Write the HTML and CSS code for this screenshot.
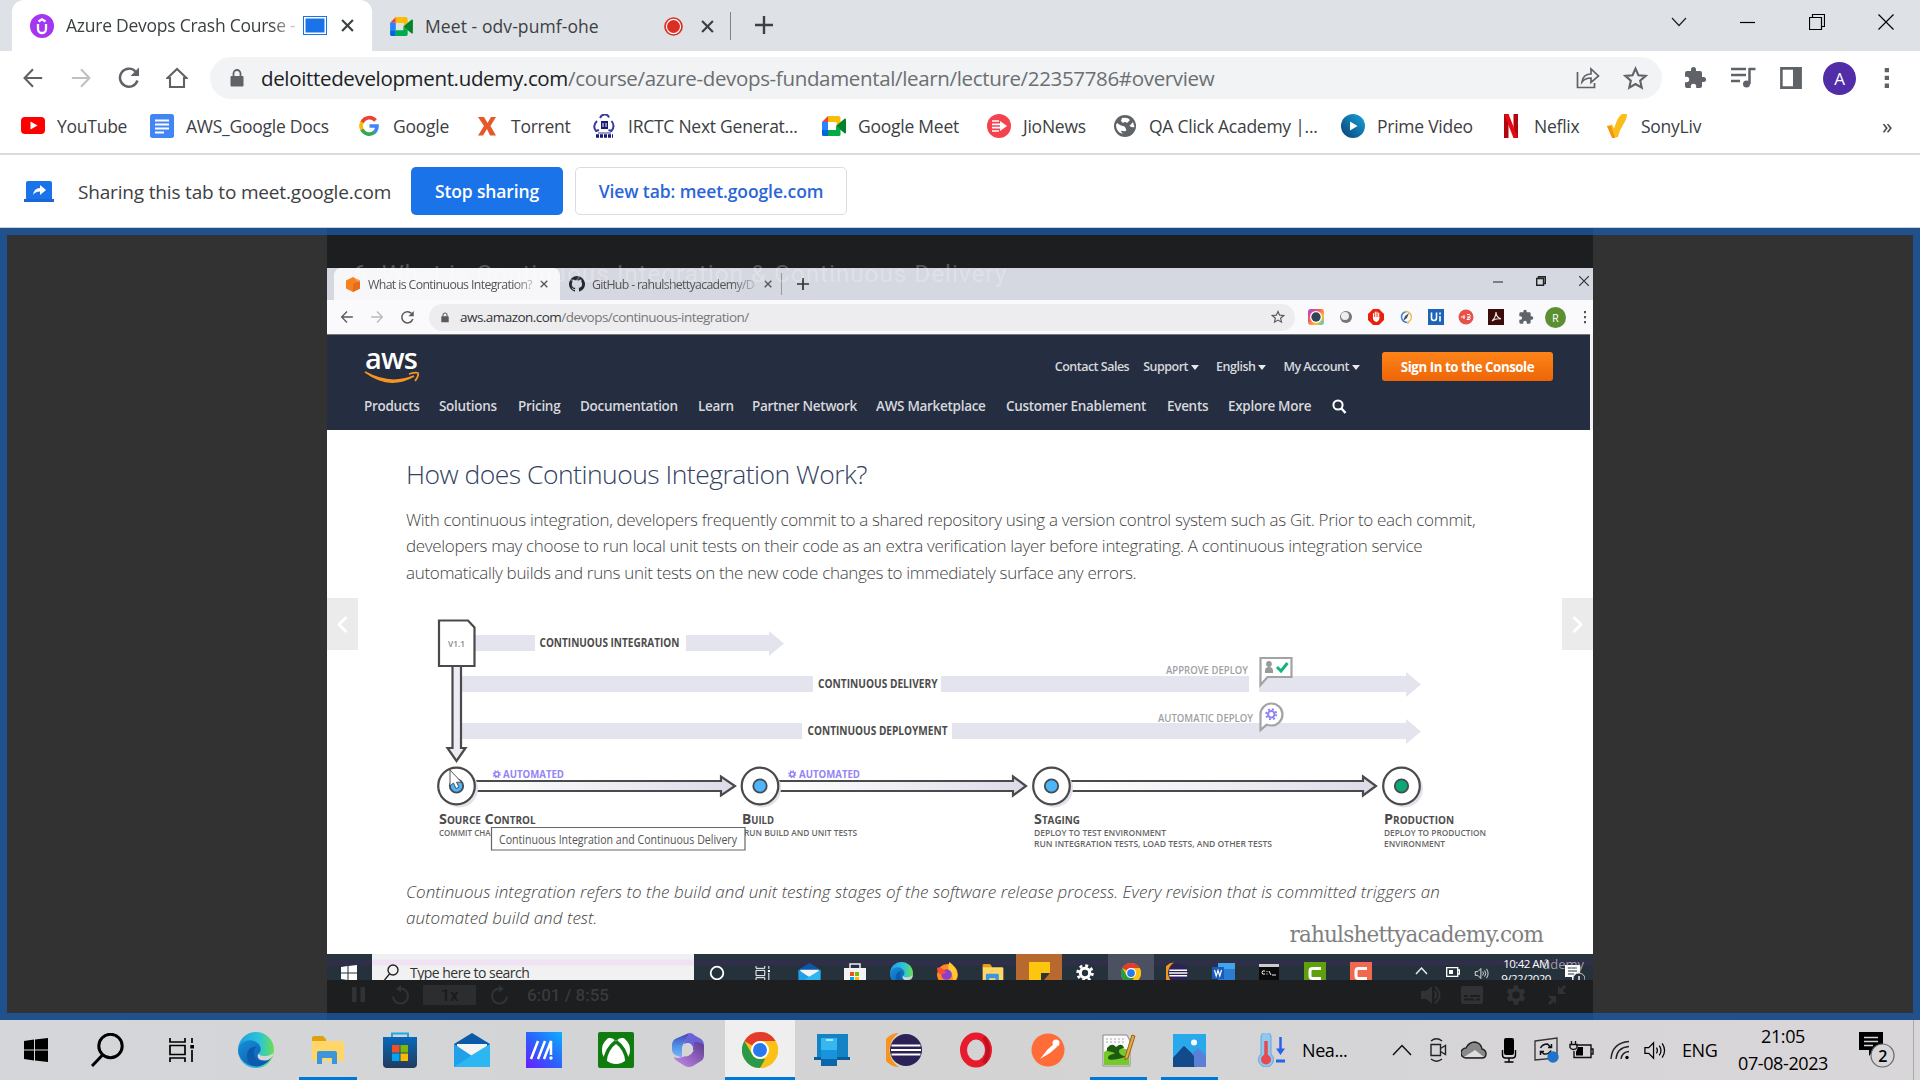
FILE: index.html
```html
<!DOCTYPE html>
<html lang="en">
<head>
<meta charset="utf-8">
<title>Azure Devops Crash Course</title>
<link rel="stylesheet" href="styles.css">
</head>
<body>
<svg class="defs" aria-hidden="true">
  <defs>
    <linearGradient id="edgeA" x1="0" y1="0" x2="1" y2="0"><stop offset="0" stop-color="#1d9fe0"/><stop offset=".6" stop-color="#2bc4d8"/><stop offset="1" stop-color="#6be04f"/></linearGradient>
    <linearGradient id="edgeB" x1="0" y1="0" x2="1" y2="1"><stop offset="0" stop-color="#1791dc"/><stop offset="1" stop-color="#0b4fa0"/></linearGradient>
    <linearGradient id="shaft" x1="0" y1="0" x2="1" y2="0"><stop offset="0" stop-color="#fff"/><stop offset="1" stop-color="#dcdce8"/></linearGradient>
    <linearGradient id="store" x1="0" y1="0" x2="0" y2="1"><stop offset="0" stop-color="#0669b8"/><stop offset="1" stop-color="#243a5e"/></linearGradient>
    <linearGradient id="mx" x1="0" y1="1" x2="1" y2="0"><stop offset="0" stop-color="#6a1bff"/><stop offset=".5" stop-color="#2a64fb"/><stop offset="1" stop-color="#0db0ff"/></linearGradient>
    <linearGradient id="prime" x1="0" y1="1" x2="1" y2="0"><stop offset="0" stop-color="#0a3f73"/><stop offset="1" stop-color="#17a5dc"/></linearGradient>
    <linearGradient id="insta" x1="0" y1="0" x2="1" y2="1"><stop offset="0" stop-color="#a43cf0"/><stop offset=".4" stop-color="#ff5a5a"/><stop offset=".7" stop-color="#ffc12e"/><stop offset="1" stop-color="#27c4f0"/></linearGradient>
    <linearGradient id="m365a" x1="0" y1="0" x2="0" y2="1"><stop offset="0" stop-color="#4a3fae"/><stop offset=".5" stop-color="#4c8fe6"/><stop offset="1" stop-color="#7fb7f5"/></linearGradient>
    <linearGradient id="m365b" x1="0" y1="1" x2="1" y2="0"><stop offset="0" stop-color="#c98af0"/><stop offset="1" stop-color="#5b3a8e"/></linearGradient>
  </defs>
  <symbol id="i-chrome" viewBox="0 0 48 48"><circle cx="24" cy="24" r="24" fill="#fbc116"/><path d="M24 0a24 24 0 0 1 20.800 12H24A12 12 0 0 0 13.600 18L3.200 12A24 24 0 0 1 24 0z" fill="#e33b2e"/><path d="M3.200 12 13.600 30A12 12 0 0 0 24 36h10.400L24 48A24 24 0 0 1 3.200 12z" fill="#2a9a48"/><path d="M34.400 30 24 48A24 24 0 0 0 44.800 12H24z" fill="#fbc116"/><circle cx="24" cy="24" r="12" fill="#fff"/><circle cx="24" cy="24" r="9.300" fill="#2a79ec"/></symbol>
  <symbol id="i-edge" viewBox="0 0 36 36"><circle cx="18" cy="18" r="18" fill="url(#edgeA)"/><path d="M0 18C1 9 12 6 18 10c5 3 6 8 3 11-2 4-1 7 5 7 3 0 5-1 7-2A18 18 0 0 1 0 18z" fill="url(#edgeB)"/><path d="M20.500 21.500C18 25 21 29 27 28.500c3 0 5-1 8-5l1-3c-4 3-7 4-10 3.500-3 0-5-1-5.500-2.500z" class="edge-gap"/><path d="M9 24c0-6 4-10 10-9-5 3-5 13 7 17-9 6-17 0-17-8z" fill="#0c5aab"/></symbol>
  <symbol id="i-meet" viewBox="0 0 24 20"><path d="M0 6 6 0v6z" fill="#ea4335"/><path d="M6 0h11v6H6z" fill="#fbbc04"/><path d="M17 0l1.500 1.500V8l-4 3V6H6V0z" fill="#fbbc04"/><path d="M0 6h6v8H0z" fill="#2684fc"/><path d="M0 14h6v6H1.500A1.500 1.500 0 0 1 0 18.500z" fill="#0066da"/><path d="M6 14h8v-4l4.500 3.600V18.500a1.500 1.500 0 0 1-1.500 1.500H6z" fill="#00ac47"/><path d="M14 10 22.500 2.800c.6-.5 1.500-.2 1.500.7v13c0 1-.9 1.200-1.500.7z" fill="#00832d"/></symbol>
  <symbol id="i-eclipse" viewBox="0 0 36 36"><path d="M13 1a17 17 0 0 0 0 34 20 20 0 0 1 0-34z" fill="#f7941e"/><circle cx="20" cy="18" r="16" fill="#2c2255"/><path d="M5.500 13.500h29M5 18h30M5.500 22.500h29" stroke="#fff" stroke-width="2.200"/></symbol>
  <symbol id="i-gear" viewBox="0 0 24 24"><path fill-rule="evenodd" d="M19.400 13a7.500 7.500 0 0 0 0-2l2.100-1.600-2-3.500-2.500 1a7.300 7.300 0 0 0-1.700-1L14.900 3h-4l-.4 2.700-1.700 1-2.500-1-2 3.500L6.400 11a7.500 7.500 0 0 0 0 2l-2.100 1.600 2 3.500 2.500-1 1.700 1 .4 2.900h4l.4-2.900 1.700-1 2.500 1 2-3.500zM12.900 15.500a3.500 3.500 0 1 1 0-7 3.500 3.500 0 0 1 0 7z"/></symbol>
  <symbol id="i-cog" viewBox="0 0 20 20"><circle cx="10" cy="10" r="5.200" fill="none" stroke="currentColor" stroke-width="3.400"/><circle cx="10" cy="10" r="8.200" fill="none" stroke="currentColor" stroke-width="3" stroke-dasharray="3.220 3.220"/></symbol>
  <symbol id="i-puzzle" viewBox="0 0 24 24"><path d="M20.500 11H19V7a2 2 0 0 0-2-2h-4V3.500a2.500 2.500 0 0 0-5 0V5H4a2 2 0 0 0-2 2v3.800h1.500a2.700 2.700 0 0 1 0 5.400H2V20a2 2 0 0 0 2 2h3.800v-1.500a2.700 2.700 0 0 1 5.400 0V22H17a2 2 0 0 0 2-2v-4h1.500a2.500 2.500 0 0 0 0-5z"/></symbol>
  <symbol id="i-back" viewBox="0 0 24 24"><path d="M22 12H3M12 2.500 2.800 12l9.200 9.500" fill="none" stroke="currentColor" stroke-width="2.300"/></symbol>
  <symbol id="i-reload" viewBox="0 0 24 24"><path d="M20.500 14.500A9 9 0 1 1 18.500 5.500" fill="none" stroke="currentColor" stroke-width="2.400"/><path d="M22 1.500V10h-8.500z" fill="currentColor"/></symbol>
  <symbol id="i-star" viewBox="0 0 24 24"><path d="m12 2.500 2.800 6.300 6.900.7-5.200 4.600 1.500 6.700-6-3.500-6 3.500 1.500-6.700L2.300 9.500l6.900-.7z" fill="none" stroke="currentColor" stroke-width="2"/></symbol>
  <symbol id="i-lock" viewBox="0 0 14 18"><path d="M1.500 7h11q1 0 1 1v8.500q0 1-1 1h-11q-1 0-1-1V8q0-1 1-1z" fill="currentColor"/><path d="M3.500 8V4.500a3.500 3.500 0 0 1 7 0V8" fill="none" stroke="currentColor" stroke-width="1.800"/></symbol>
  <symbol id="i-x" viewBox="0 0 12 12"><path d="m1 1 10 10M11 1 1 11" stroke="currentColor" stroke-width="2"/></symbol>
  <symbol id="i-spk" viewBox="0 0 24 24"><path d="M2 9h4l5-5v16l-5-5H2z" fill="none" stroke="currentColor" stroke-width="1.300"/><path d="M14 9q2 3 0 6M17 7q3.500 5 0 10M20 4.500q5 7.500 0 15" fill="none" stroke="currentColor" stroke-width="1.300"/></symbol>
  <symbol id="i-task" viewBox="0 0 26 24"><path d="M1 0v4h15V0M1 24v-4h15v4M1 7.500h15v9H1z" fill="none" stroke="currentColor" stroke-width="1.700"/><path d="M23 0v5M23 12v12" stroke="currentColor" stroke-width="1.700"/><path d="M21.300 7h3.700v3.500h-3.700z" fill="currentColor"/></symbol>
  <symbol id="i-folder" viewBox="0 0 34 28"><path d="M1 2q0-2 2-2h9l3 3v4H1z" fill="#e0a010"/><path d="M1 5h30q2 0 2 2v18H1z" fill="#ffd667"/><path d="M6 28V17q0-2 2-2h16q2 0 2 2v11h-5v-5q0-1-1-1h-8q-1 0-1 1v5z" fill="#3b96dd"/></symbol>
  <symbol id="i-mail" viewBox="0 0 36 34"><path d="M0 11 18 0l18 11v3H0z" fill="#0a5aa8"/><path d="M3 11h30v5L18 23 3 16z" fill="#f4f4f4"/><path d="m0 11 18 12v11H0z" fill="#1fa0e8"/><path d="M36 11v23H0l18-12z" fill="#2cb6f2"/></symbol>
</svg>

<header class="tabstrip">
  <div class="tab tab-active">
    <svg width="24" height="24" viewBox="0 0 24 24"><circle cx="12" cy="12" r="12" fill="#a435f0"/><path d="M8 10v5a4 4 0 0 0 8 0v-5M8.500 7.500 12 5.300l3.500 2.200" fill="none" stroke="#fff" stroke-width="2.300"/></svg>
    <span class="tab-title faded">Azure Devops Crash Course -</span>
    <i class="cast"></i>
    <svg class="close" width="13" height="13"><use href="#i-x"/></svg>
  </div>
  <div class="tab tab-idle">
    <svg width="23" height="19"><use href="#i-meet"/></svg>
    <span class="tab-title meet">Meet - odv-pumf-ohe</span>
    <svg width="19" height="19" viewBox="0 0 19 19"><circle cx="9.500" cy="9.500" r="8.500" fill="#fff" stroke="#d93025" stroke-width="1.700"/><circle cx="9.500" cy="9.500" r="6.500" fill="#d93025"/></svg>
    <svg class="close2" width="13" height="13"><use href="#i-x"/></svg>
  </div>
  <svg class="plus" width="18" height="18" viewBox="0 0 18 18"><path d="M9 0v18M0 9h18" stroke="#3c4043" stroke-width="2.400"/></svg>
  <div class="wctl">
    <svg width="16" height="10" viewBox="0 0 16 10"><path d="m1 1 7 7.500L15 1" fill="none" stroke="#222" stroke-width="1.200"/></svg>
    <svg width="16" height="16" viewBox="0 0 16 16"><path d="M0 8.500h15" stroke="#000" stroke-width="1.200"/></svg>
    <svg width="16" height="16" viewBox="0 0 16 16"><path d="M.5 3.500h12v12H.5zM3.500 3V.5h12v12h-3" fill="none" stroke="#000" stroke-width="1.200"/></svg>
    <svg width="16" height="16" viewBox="0 0 16 16"><path d="m.5.5 15 15m0-15-15 15" stroke="#000" stroke-width="1.200"/></svg>
  </div>
</header>

<nav class="toolbar">
  <div class="navbtns">
    <svg width="22" height="22"><use href="#i-back"/></svg>
    <svg class="fwd" width="22" height="22"><use href="#i-back"/></svg>
    <svg width="24" height="24"><use href="#i-reload"/></svg>
    <svg width="22" height="22" viewBox="0 0 22 22"><path d="M1.500 11 11 2l9.500 9H18v9H4v-9z" fill="none" stroke="currentColor" stroke-width="2.100"/></svg>
  </div>
  <div class="omni">
    <svg class="lock" width="14" height="18"><use href="#i-lock"/></svg>
    <span class="url"><b>deloittedevelopment.udemy.com</b>/course/azure-devops-fundamental/learn/lecture/22357786#overview</span>
    <svg class="share" width="24" height="22" viewBox="0 0 24 22"><path d="M1.500 5v15.500h17V16" fill="none" stroke="#5f6368" stroke-width="1.700"/><path d="M6 15q1-8 9-8V2l7.500 7-7.500 6.500V11q-6 0-9 4z" fill="none" stroke="#5f6368" stroke-width="1.700"/></svg>
    <svg class="star" width="25" height="25"><use href="#i-star"/></svg>
  </div>
  <div class="tools">
    <svg width="24" height="24" fill="#5f6368"><use href="#i-puzzle"/></svg>
    <svg width="25" height="22" viewBox="0 0 25 22"><path d="M0 2h15M0 8h15M0 14h9M18.500 1v16M18 2h6.500" stroke="#5f6368" stroke-width="2.500"/><circle cx="15.500" cy="17" r="3.500" fill="#5f6368"/></svg>
    <svg width="22" height="22" viewBox="0 0 22 22"><path d="M1.400 1.400h19.200v19.200H1.400z" fill="none" stroke="#5f6368" stroke-width="2.600"/><path d="M13 1h8v20h-8z" fill="#5f6368"/></svg>
    <span class="avatar">A</span>
    <svg width="6" height="22" viewBox="0 0 6 22"><path d="M.7 1h4.300v4.300H.7zM.7 8.800h4.300v4.300H.7zM.7 16.600h4.300v4.300H.7z" fill="#5f6368"/></svg>
  </div>
</nav>

<nav class="bookmarks">
  <a><svg viewBox="0 0 24 24"><rect y="3" width="24" height="17" rx="4" fill="#f00"/><path d="m9.500 7.500 7 4-7 4z" fill="#fff"/></svg>YouTube</a>
  <a><svg viewBox="0 0 24 24"><rect width="24" height="24" rx="2.500" fill="#4285f4"/><path d="M5 6.500h14M5 10.500h14M5 14.500h14M5 18.500h9" stroke="#fff" stroke-width="2"/></svg>AWS_Google Docs</a>
  <a><svg viewBox="0 0 24 24"><path d="M18.500 6.500A8 8 0 0 0 5 8.500" fill="none" stroke="#ea4335" stroke-width="3.600"/><path d="M5 8.200a8 8 0 0 0 0 7.600" fill="none" stroke="#fbbc05" stroke-width="3.600"/><path d="M5 15.500a8 8 0 0 0 12.500 2.600" fill="none" stroke="#34a853" stroke-width="3.600"/><path d="M12.500 12H20q0 4-2.800 6.500" fill="none" stroke="#4285f4" stroke-width="3.600"/></svg>Google</a>
  <a><svg viewBox="0 0 24 24"><path d="M3 3h6l3.500 6L16 3h5l-5.500 9L21 21.500h-6L12 15l-4 6.500H3L9 12z" fill="#e8572a"/></svg>Torrent</a>
  <a><svg viewBox="0 0 24 24"><path d="M8 4q2-4 5-3.500 3 0 4 3M5 7q-5 5-1 10l3-1M19.500 7q4 5 0 10l-3-1" fill="none" stroke="#3a3aa0" stroke-width="2"/><path d="M9 7h7v8H9z" fill="#191970"/><path d="M6 19h13" stroke="#7a7ac5" stroke-width="1.500"/><path d="M4 22h17" stroke="#191970" stroke-width="3.500" stroke-dasharray="3 1"/><path d="M11 9v4M14 9v4" stroke="#fff"/></svg>IRCTC Next Generat...</a>
  <a><svg viewBox="0 -2 24 24"><use href="#i-meet" width="24" height="20"/></svg>Google Meet</a>
  <a><svg viewBox="0 0 24 24"><circle cx="12" cy="12" r="12" fill="#f4434f"/><path d="M5 7h7M5 10.300h8M5 13.600h8M5 17h7" stroke="#fff" stroke-width="1.700"/><path d="m13 7 7 5-7 5z" fill="#fff"/></svg>JioNews</a>
  <a><svg viewBox="0 0 24 24"><circle cx="12" cy="12" r="11" fill="#5f6368"/><path d="M4 9q4 3 6 3t3 3-3 2 0 3Q3 18 3 11zM9 4q6-1 8 2l-3 3q-2-2-4 0l-2-2zM20 8l1.500 5q-2 1-5-1z" fill="#fff"/></svg>QA Click Academy |...</a>
  <a><svg viewBox="0 0 24 24"><circle cx="12" cy="12" r="12" fill="url(#prime)"/><path d="m9 7.500 7.500 4.500L9 16.500z" fill="#fff"/></svg>Prime Video</a>
  <a><svg viewBox="0 0 24 24"><path d="M6 0h4.500v24H6zM15.500 0H20v24h-4.500z" fill="#b1060f"/><path d="M6 0h4.500L20 24h-4.500z" fill="#e50914"/></svg>Neflix</a>
  <a><svg viewBox="0 0 24 24"><path d="m2 12 5-1.500 2 4Q13 2 17 0l5 0q0 5-4 11-4 6-5 12l-5 1z" fill="#fbbd1a"/><path d="M2 12h4l4 12H7z" fill="#f39410"/></svg>SonyLiv</a>
  <span class="more">»</span>
</nav>

<section class="infobar">
  <svg class="shareic" width="31" height="21" viewBox="0 0 31 21"><path d="M2 1.500Q2 0 4 0h22q2 0 2 1.500V18H2z" fill="#1a73e8"/><path d="M0 18h30v3H0z" fill="#1a66d6"/><path d="M9 14q1-7 7-7V4l6 5-6 5v-3.500q-5 0-7 3.500z" fill="#fff"/></svg>
  <span class="sharing">Sharing this tab to meet.google.com</span>
  <button class="stop">Stop sharing</button>
  <button class="view">View tab: meet.google.com</button>
</section>

<main class="stage">
 <div class="video">
  <div class="vtop"></div>
  <div class="vtabs">
    <div class="vtab">
      <svg width="14" height="15" viewBox="0 0 14 15"><path d="m7 0 7 3.500v8L7 15l-7-3.500v-8z" fill="#f58220"/><path d="M7 7l7-3.500v8L7 15z" fill="#ea6a1c"/></svg>
      <span class="vt1">What is Continuous Integration?</span>
      <svg width="8" height="8"><use href="#i-x"/></svg>
    </div>
    <div class="vtab2">
      <svg width="16" height="16" viewBox="0 0 16 16"><path d="M8 0a8 8 0 0 0-2.500 15.600c.4 0 .5-.2.500-.4v-1.500C3.800 14.200 3.300 12.700 3.300 12.700c-.4-.9-.9-1.200-.9-1.200 1-.3 1.300.8 1.600 1 .7.8 1.500.6 2 .4 0-.5.3-.9.500-1-1.800-.3-3.700-1-3.700-4 0-.9.3-1.600.8-2.200 0-.5-.3-1.200.1-2.200.8 0 1.600.5 2.200.9a7.700 7.700 0 0 1 4 0c1.600-1.100 2.300-.9 2.300-.9.400 1 .1 1.700.1 2.200.5.600.8 1.300.8 2.200 0 3-1.900 3.700-3.700 3.900.5.500.6 1 .6 1.600v1.800c0 .2.100.5.500.4A8 8 0 0 0 8 0z" fill="#24292e"/></svg>
      <span class="vt2">GitHub - rahulshettyacademy/De</span>
      <svg width="8" height="8"><use href="#i-x"/></svg>
    </div>
    <svg class="vplus" width="12" height="12" viewBox="0 0 12 12"><path d="M6 0v12M0 6h12" stroke="#333" stroke-width="1.700"/></svg>
    <div class="vctl">
      <svg width="10" height="10" viewBox="0 0 10 10"><path d="M0 6h10" stroke="#444" stroke-width="1.200"/></svg>
      <svg width="10" height="10" viewBox="0 0 10 10"><path d="M.7 2.500h6.800v6.800H.7zM2.500 2V.7h6.800v6.800H8" fill="none" stroke="#222" stroke-width="1.400"/></svg>
      <svg width="10" height="10" viewBox="0 0 10 10"><path d="m0 0 10 10M10 0 0 10" stroke="#333" stroke-width="1.200"/></svg>
    </div>
  </div>
  <div class="vbar">
    <div class="vnav">
      <svg width="14" height="14"><use href="#i-back"/></svg>
      <svg class="fwd" width="14" height="14"><use href="#i-back"/></svg>
      <svg width="15" height="15"><use href="#i-reload"/></svg>
    </div>
    <div class="vomni"><svg width="8" height="11"><use href="#i-lock"/></svg><span class="vurl"><b>aws.amazon.com</b>/devops/continuous-integration/</span><svg class="vstar" width="14" height="14"><use href="#i-star"/></svg></div>
    <div class="vext">
      <svg viewBox="0 0 16 16"><rect width="16" height="16" rx="3" fill="url(#insta)"/><circle cx="8" cy="8" r="6" fill="#fff"/><circle cx="8" cy="8" r="4.700" fill="#2f4454"/></svg>
      <svg viewBox="0 0 16 16"><circle cx="8" cy="8" r="6" fill="#777"/><circle cx="7" cy="7" r="4" fill="#eee"/></svg>
      <svg viewBox="0 0 16 16"><path d="M5 0h6l5 5v6l-5 5H5l-5-5V5z" fill="#e8200c"/><path d="M5.500 9V4.500M7.300 8V3M9 8V3M10.700 9V4" stroke="#fff" stroke-width="1.100" stroke-linecap="round"/><path d="M5 8h6.300v2q-.8 3-3 3T5 10z" fill="#fff"/></svg>
      <svg viewBox="0 0 16 16"><path d="M9 2.500a5.500 5.500 0 1 0 0 11" fill="none" stroke="#3a82d8" stroke-width="1.500"/><path d="M7 2.500a5.500 5.500 0 0 1 3 10.500v2" fill="none" stroke="#f2b84a" stroke-width="1.500"/><path d="m11 4-2 5-4 3 2-5z" fill="#456"/></svg>
      <svg viewBox="0 0 16 16"><rect width="16" height="16" fill="#1d64b8"/><path d="M3.500 3.500V9a2.500 2.500 0 0 0 5 0V3.500M12 7v5.500M12 3.500v2" fill="none" stroke="#fff" stroke-width="1.600"/></svg>
      <svg viewBox="0 0 16 16"><circle cx="8" cy="8" r="7.500" fill="#e8504a"/><path d="M3 8h4M6 6v4M9 5.500h2.500q1.500 1.200 0 2.500H9m2.500 0q1.500 1.500 0 2.500H9z" fill="none" stroke="#fff"/></svg>
      <svg viewBox="0 0 16 16"><rect width="16" height="16" fill="#3a0c0a"/><path d="M4 12q4-4 4-9 0 5 5 7-5-1-9 2z" fill="none" stroke="#f0dada" stroke-width="1.200"/></svg>
      <svg viewBox="0 0 24 24" fill="#5f6368"><use href="#i-puzzle"/></svg>
      <span class="vav">R</span>
      <svg viewBox="0 0 16 16"><path d="M7 2h2v2.200H7zM7 7h2v2.200H7zM7 12h2v2.200H7z" fill="#555"/></svg>
    </div>
  </div>
  <div class="aws">
    <div class="awstop">
      <div class="logo"><span>aws</span><svg width="56" height="13" viewBox="0 0 56 13"><path d="M1 1q24 18 49 4-24 10-49-4z" fill="#f79521" stroke="#f79521" stroke-width="1.500"/><path d="M45 3q7-2 9-1 1 3-3 8" fill="none" stroke="#f79521" stroke-width="1.800"/></svg></div>
      <div class="acct"><span>Contact Sales</span><span class="dd">Support</span><span class="dd">English</span><span class="dd">My Account</span><button class="signin">Sign In to the Console</button></div>
    </div>
    <div class="awsnav"><span>Products</span><span>Solutions</span><span>Pricing</span><span>Documentation</span><span>Learn</span><span>Partner Network</span><span>AWS Marketplace</span><span>Customer Enablement</span><span>Events</span><span>Explore More</span><svg width="15" height="15" viewBox="0 0 15 15"><circle cx="6" cy="6" r="4.600" fill="none" stroke="#fff" stroke-width="2"/><path d="m9.500 9.500 4 4.500" stroke="#fff" stroke-width="2.400"/></svg></div>
  </div>
  <div class="page">
    <h1>How does Continuous Integration Work?</h1>
    <p class="l1">With continuous integration, developers frequently commit to a shared repository using a version control system such as Git. Prior to each commit,<br>developers may choose to run local unit tests on their code as an extra verification layer before integrating. A continuous integration service<br>automatically builds and runs unit tests on the new code changes to immediately surface any errors.</p>
    <svg class="diagram" width="1266" height="260" viewBox="327 606 1266 260">
      <g fill="#e4e4ee">
        <path d="M475 635h60v16h-60zM686 635h83v-4l15 12.500-15 12.500v-5h-83z"/>
        <path d="M462 676h351v16H462zM941 676h308v16H941zM1259 676h147v-4l15 12.500-15 12.500v-5h-147z"/>
        <path d="M462 723h340v16H462zM952 723h454v-4l15 12.500-15 12.500v-5H952z"/>
      </g>
      <g class="d-bar">
        <text x="539.500" y="647" textLength="140" lengthAdjust="spacingAndGlyphs">CONTINUOUS INTEGRATION</text>
        <text x="818" y="687.500" textLength="119.500" lengthAdjust="spacingAndGlyphs">CONTINUOUS DELIVERY</text>
        <text x="807.500" y="734.500" textLength="140" lengthAdjust="spacingAndGlyphs">CONTINUOUS DEPLOYMENT</text>
      </g>
      <g class="d-dep">
        <text x="1166" y="674" textLength="82" lengthAdjust="spacingAndGlyphs">APPROVE DEPLOY</text>
        <text x="1158" y="721.500" textLength="95" lengthAdjust="spacingAndGlyphs">AUTOMATIC DEPLOY</text>
      </g>
      <path d="M1260.500 658h31v19h-24l-7 8z" fill="#fff" stroke="#a3a3a6" stroke-width="2.200"/>
      <circle cx="1269" cy="664" r="2.900" fill="#999"/><path d="M1265 673v-2q0-4 4-4t4 4v2z" fill="#999"/><path d="m1277 667 4 4 6.500-8" fill="none" stroke="#12b57c" stroke-width="2.900"/>
      <path d="M1260.500 730v-15a11 11 0 1 1 11 10.500q-3 0-5-.7z" fill="#fff" stroke="#a3a3a6" stroke-width="2.200"/>
      <svg x="1265" y="708" width="12.500" height="12.500" color="#8f84f7"><use href="#i-cog"/></svg>
      <g fill="#fff" stroke="#4a4a4a" stroke-width="2.200">
        <path d="M439 620.500h29l6.500 7V666H439z"/>
        <path d="M452.500 666h8.500v82h4.500l-9 13-9-13h5z" fill="#ececf4"/>
        <path d="M475 781h246v-4.500l14 9.500-14 9.500v-4.500H475z" fill="url(#shaft)"/>
        <path d="M779 781h234v-4.500l13 9.500-13 9.500v-4.500H779z" fill="url(#shaft)"/>
        <path d="M1071 781h292v-4.500l13 9.500-13 9.500v-4.500h-292z" fill="url(#shaft)"/>
      </g>
      <g fill="#e2e2ea"><circle cx="459" cy="788.500" r="19"/><circle cx="762" cy="788.500" r="19"/><circle cx="1054" cy="788.500" r="19"/><circle cx="1404" cy="788.500" r="19"/></g>
      <g fill="#fff" stroke="#4a4a4a" stroke-width="2.200"><circle cx="456.500" cy="786" r="18.300"/><circle cx="760" cy="786" r="18.300"/><circle cx="1051.500" cy="786" r="18.300"/><circle cx="1401.500" cy="786" r="18.300"/></g>
      <g fill="#4db5f9" stroke="#444b52" stroke-width="1.800"><circle cx="456.500" cy="786" r="6.700"/><circle cx="760" cy="786" r="6.700"/><circle cx="1051.500" cy="786" r="6.700"/><circle cx="1401.500" cy="786" r="6.700" fill="#0ba873"/></g>
      <path d="M450 770v16l3.500-3 2.500 5.500 3-1.300-2.500-5h5z" fill="#fff" stroke="#444" stroke-width=".9"/>
      <text class="d-ver" x="448" y="647" textLength="17" lengthAdjust="spacingAndGlyphs">V1.1</text>
      <g color="#8f7ff5"><svg x="492.500" y="770" width="8.500" height="8.500"><use href="#i-cog"/></svg><svg x="788" y="770" width="8.500" height="8.500"><use href="#i-cog"/></svg></g>
      <g class="d-auto"><text x="503" y="777.500" textLength="61" lengthAdjust="spacingAndGlyphs">AUTOMATED</text><text x="799" y="777.500" textLength="61" lengthAdjust="spacingAndGlyphs">AUTOMATED</text></g>
      <g class="d-name"><text x="439" y="824" textLength="96.500" lengthAdjust="spacingAndGlyphs">Source Control</text><text x="742" y="824" textLength="32" lengthAdjust="spacingAndGlyphs">Build</text><text x="1034" y="824" textLength="46" lengthAdjust="spacingAndGlyphs">Staging</text><text x="1384" y="824" textLength="70" lengthAdjust="spacingAndGlyphs">Production</text></g>
      <g class="d-sub"><text x="439" y="836" textLength="51.500" lengthAdjust="spacingAndGlyphs">COMMIT CHA</text><text x="744" y="836" textLength="113" lengthAdjust="spacingAndGlyphs">RUN BUILD AND UNIT TESTS</text><text x="1034" y="836" textLength="132" lengthAdjust="spacingAndGlyphs">DEPLOY TO TEST ENVIRONMENT</text><text x="1034" y="846.500" textLength="238" lengthAdjust="spacingAndGlyphs">RUN INTEGRATION TESTS, LOAD TESTS, AND OTHER TESTS</text><text x="1384" y="836" textLength="102" lengthAdjust="spacingAndGlyphs">DEPLOY TO PRODUCTION</text><text x="1384" y="846.500" textLength="61" lengthAdjust="spacingAndGlyphs">ENVIRONMENT</text></g>
      <path d="M491.500 827.500h253.500v22.500H491.500z" fill="#fff" stroke="#666" stroke-width="1.200"/>
      <text class="d-tip" x="499" y="843.500" textLength="238" lengthAdjust="spacingAndGlyphs">Continuous Integration and Continuous Delivery</text>
    </svg>
    <p class="l2">Continuous integration refers to the build and unit testing stages of the software release process. Every revision that is committed triggers an<br>automated build and test.</p>
    <span class="site">rahulshettyacademy.com</span>
  </div>
  <div class="vtask">
    <div class="vstart"><svg width="16" height="16" viewBox="0 0 16 16"><path d="m0 2 6.500-1v6.500H0zM7.500.9 16 0v7.500H7.500zM0 8.500h6.500V15L0 14zM7.500 8.500H16V16l-8.500-1z" fill="#fff"/></svg></div>
    <div class="vsearch"><svg width="15" height="17" viewBox="0 0 15 17"><circle cx="9" cy="6" r="5" fill="none" stroke="#222" stroke-width="1.400"/><path d="m5.500 10-5 6" stroke="#222" stroke-width="1.400"/></svg><span>Type here to search</span></div>
    <div class="vicons">
      <div><svg width="16" height="16" viewBox="0 0 16 16"><circle cx="8" cy="8" r="6.300" fill="none" stroke="#fff" stroke-width="1.800"/></svg></div>
      <div><svg class="w" width="16" height="14"><use href="#i-task"/></svg></div>
      <div><svg width="23" height="21"><use href="#i-mail"/></svg></div>
      <div><svg width="22" height="22" viewBox="0 0 22 22"><path d="M6 6V2h10v4" fill="none" stroke="#eee" stroke-width="1.500"/><path d="M0 6h22v16H0z" fill="#f3f3f3"/><path d="M6 10h4v4H6z" fill="#f25022"/><path d="M11 10h4v4h-4z" fill="#7fba00"/><path d="M6 15h4v4H6z" fill="#00a4ef"/><path d="M11 15h4v4h-4z" fill="#ffb900"/></svg></div>
      <div class="dark"><svg width="23" height="23"><use href="#i-edge"/></svg></div>
      <div><svg width="23" height="23" viewBox="0 0 24 24"><circle cx="12" cy="13" r="11" fill="#ff8a1f"/><path d="M14 0q8 6 8 13 0 6-5 9 2-8-2-11T14 0z" fill="#ffcb32"/><circle cx="11" cy="13" r="5.500" fill="#8b3fd0"/><path d="M1 6q4-1 7 2l3 3-5 2Q1 12 1 6z" fill="#ff4b3a"/></svg></div>
      <div><svg width="22" height="20"><use href="#i-folder"/></svg></div>
      <div class="c-orange"><svg width="21" height="22" viewBox="0 0 21 22"><path d="M0 0h21v11l-9 11H0z" fill="#fcc60e"/><path d="M12 22V11h9z" fill="#333"/></svg></div>
      <div class="w"><svg width="18" height="18"><use href="#i-cog"/></svg></div>
      <div class="c-grey"><svg width="20" height="20"><use href="#i-chrome"/></svg></div>
      <div><svg width="22" height="22"><use href="#i-eclipse"/></svg></div>
      <div><svg width="23" height="20" viewBox="0 0 23 20"><path d="M6 0h17v20H6z" fill="#2b7cd3"/><path d="M6 0h17v6H6z" fill="#41a5ee"/><path d="M0 4h12v12H0z" fill="#185abd"/><path d="m2.500 7 1.700 6L6 7.500 7.800 13l1.700-6" fill="none" stroke="#fff" stroke-width="1.200"/></svg></div>
      <div><svg width="20" height="18" viewBox="0 0 20 18"><path d="M0 0h20v18H0z" fill="#0a0a0a"/><path d="M0 0h20v3H0z" fill="#ccc"/><path d="M6 7q-3-1-3 1.500T6 10M8 7v1M8 9.500v1M10 7l2 4M13 11h4" fill="none" stroke="#eee"/></svg></div>
      <div><svg width="22" height="22" viewBox="0 0 22 22"><path d="M0 0h22v22H0z" fill="#5fa00c"/><path d="M17 6.500H8.500Q6 6.500 6 9v5q0 2.500 2.500 2.500H17" fill="none" stroke="#fff" stroke-width="3"/></svg></div>
      <div><svg width="22" height="22" viewBox="0 0 22 22"><path d="M0 0h22v22H0z" fill="#f2684e"/><path d="M17 6.500H8.500Q6 6.500 6 9v5q0 2.500 2.500 2.500H17" fill="none" stroke="#fff" stroke-width="3"/></svg></div>
    </div>
    <div class="vtray">
      <svg width="13" height="8" viewBox="0 0 13 8"><path d="m1 7 5.500-6L12 7" fill="none" stroke="#eee" stroke-width="1.400"/></svg>
      <svg width="14" height="10" viewBox="0 0 14 10"><path d="M.7.700h11v8.600H.7zM12 3h1.500v4H12" fill="none" stroke="#fff" stroke-width="1.300"/><path d="M3 3h4v4H3z" fill="#fff"/></svg>
      <svg class="w" width="17" height="15"><use href="#i-spk"/></svg>
      <div class="vclock">10:42 AM<br>9/22/2020</div>
      <svg class="vnote" width="20" height="20" viewBox="0 0 20 20"><path d="M0 1h15v12h-5l-3 4v-4H0z" fill="#fff"/><path d="M3 4h9M3 7h9M3 10h6" stroke="#25303c" stroke-width="1.200"/><circle cx="14" cy="15" r="6" fill="#25303c" stroke="#ccc"/><path d="M14 12v6" stroke="#fff" stroke-width="1.400"/></svg>
    </div>
    <span class="mark">ûdemy</span>
  </div>
  <div class="vctrl">
    <svg width="13" height="15" viewBox="0 0 13 15"><path d="M0 0h4.500v15H0zM8.500 0H13v15H8.500z"/></svg>
    <svg class="rw" width="19" height="20" viewBox="0 0 19 20"><path d="M9.500 3.500a7.500 7.500 0 1 1-7.500 8" fill="none" stroke="#303235" stroke-width="2.200"/><path d="M10 0v7.500L5 3.700z"/></svg>
    <span class="speed">1x</span>
    <svg class="ff" width="19" height="20" viewBox="0 0 19 20"><path d="M9.500 3.500a7.500 7.500 0 1 0 7.500 8" fill="none" stroke="#303235" stroke-width="2.200"/><path d="M9 0v7.500l5-3.800z"/></svg>
    <span class="time">6:01 / 8:55</span>
    <span class="vright">
      <svg width="22" height="20" viewBox="0 0 22 20"><path d="M1 6h5l6-5v18l-6-5H1z"/><path d="M14.500 6q3 4 0 8M15 1.500q9 8.500 0 17" fill="none" stroke="#303235" stroke-width="2"/></svg>
      <svg width="22" height="18" viewBox="0 0 22 18"><rect width="22" height="18" rx="2"/><path d="M3 10h4M9 10h10M3 13.500h10M15 13.500h4" stroke="#1c1e20" stroke-width="1.800"/></svg>
      <svg width="26" height="26"><use href="#i-gear"/></svg>
      <svg width="20" height="20" viewBox="0 0 20 20"><path d="M1 11h8v8l-2.500-2.500L3 20l-2-2 3.500-3.500zM19 9h-8V1l2.500 2.500L17 0l2 2-3.500 3.500z"/></svg>
    </span>
  </div>
  <div class="vtitle">6. What is Continuous Integration &amp; Continuous Delivery</div>
  <div class="go prev"><svg width="11" height="17" viewBox="0 0 11 17"><path d="M9.500 1 2 8.500 9.500 16" fill="none" stroke="#fff" stroke-width="2.800"/></svg></div>
  <div class="go next"><svg width="11" height="17" viewBox="0 0 11 17"><path d="M1.500 1 9 8.500 1.500 16" fill="none" stroke="#fff" stroke-width="2.800"/></svg></div>
 </div>
 <div class="frame"></div>
</main>

<footer class="taskbar">
  <div class="apps">
    <div><svg width="24" height="24" viewBox="0 0 24 24"><path d="m0 3 10-1.400v10H0zM11 1.400 24 0v11.500H11zM0 12.500h10v10L0 21zM11 12.500h13V24l-13-1.500z"/></svg></div>
    <div><svg width="33" height="34" viewBox="0 0 33 34"><circle cx="19.500" cy="13" r="11.700" fill="none" stroke="#000" stroke-width="3"/><path d="M11.500 22 1 33" stroke="#000" stroke-width="3"/></svg></div>
    <div><svg width="26" height="24"><use href="#i-task"/></svg></div>
    <div><svg width="36" height="36"><use href="#i-edge"/></svg></div>
    <div class="on"><svg width="34" height="28"><use href="#i-folder"/></svg></div>
    <div><svg width="36" height="36" viewBox="0 0 36 36"><path d="M10 7V1.500h16V7" fill="none" stroke="#1fa5e8" stroke-width="2"/><path d="M1 5h34v27q0 4-4 4H5q-4 0-4-4z" fill="url(#store)"/><path d="M10 13h7.500v7.500H10z" fill="#f25022"/><path d="M18.500 13H26v7.500h-7.500z" fill="#7fba00"/><path d="M10 21.500h7.500V29H10z" fill="#00a4ef"/><path d="M18.500 21.500H26V29h-7.500z" fill="#ffb900"/></svg></div>
    <div><svg width="36" height="34"><use href="#i-mail"/></svg></div>
    <div><svg width="36" height="36" viewBox="0 0 36 36"><path d="M0 0h36v36H0z" fill="url(#mx)"/><path d="m5 27 7-18M12 27l7-18M18 27l7-18v14" fill="none" stroke="#fff" stroke-width="2.500"/><circle cx="25" cy="26" r="1.700" fill="#fff"/></svg></div>
    <div><svg width="36" height="36" viewBox="0 0 36 36"><rect width="36" height="36" rx="2" fill="#107c10"/><circle cx="18" cy="18" r="14" fill="#fff"/><path d="M9 6q5-1 9 3 4-4 9-3-4-4-9-4T9 6z" fill="#107c10"/><path d="M18 9.500Q8 17 7 29M18 9.500Q28 17 29 29" fill="none" stroke="#107c10" stroke-width="3.500"/></svg></div>
    <div><svg width="32" height="34" viewBox="0 0 32 34"><path d="M17 0q-3 9-6 11-1 2-1 7v7l-7-3q-3-2-3-5v-6q0-3 3-5z" fill="url(#m365a)"/><path d="M17 0q4 0 5 2l7 4q3 2 3 5v7l-11-1q0-6-5-7-4 0-5 3z" fill="#6a62d8"/><path d="M32 14v8q0 4-3 6l-8 5q-4 2-8 0l-8-5q-3-2-3-4 4 2 9 0l8-4q3-1 3-5v-6q10 0 10 5z" fill="url(#m365b)"/><path d="M16 10q5 1 5 6t-5 7-6-5 6-8z" fill="#d5d5d6"/></svg></div>
    <div class="on focus"><svg width="36" height="36"><use href="#i-chrome"/></svg></div>
    <div><svg width="36" height="34" viewBox="0 0 36 34"><path d="M3 1h31v24H3z" fill="#1383c6"/><path d="M0 24h36v3H0z" fill="#0b5e9e"/><path d="M7 5h16v20H7z" fill="#36b7ef"/><path d="M7 17h16v16H7z" fill="#1794db"/><path d="M7 26h16v7H7z" fill="#0c66a8"/><path d="M12 7h7" stroke="#a5e4ff" stroke-width="2"/></svg></div>
    <div><svg width="36" height="36"><use href="#i-eclipse"/></svg></div>
    <div><svg width="36" height="36" viewBox="0 0 36 36"><ellipse cx="18" cy="18" rx="12.500" ry="14" fill="none" stroke="#e81b2d" stroke-width="7"/><path d="M26 5q8 13 0 26" fill="none" stroke="#c1101f" stroke-width="4"/></svg></div>
    <div><svg width="34" height="34" viewBox="0 0 34 34"><circle cx="17" cy="17" r="16.500" fill="#ff6c37"/><path d="m9 26 8-10 6-5 3 3-7 6z" fill="#fff"/><circle cx="25" cy="10" r="3.500" fill="#fff"/></svg></div>
    <div class="on"><svg width="36" height="34" viewBox="0 0 36 34"><path d="M2 2h24l3 6v25H2z" fill="#fafafa" stroke="#888"/><path d="M3 19q12-7 25-2v15H3z" fill="#75c928"/><path d="M6 15q5-6 9-1 6-5 8 1-6 1-5 4t5 4-6 3-10-1 5-4-6-3z" fill="#1e5a12"/><path d="M5 6h18M5 9h18" stroke="#aaa" stroke-dasharray="2 2"/><path d="m24 24 7-22 3 1-7 22-3 2z" fill="#e9a93d" stroke="#94611c"/></svg></div>
    <div class="on"><svg width="33" height="33" viewBox="0 0 33 33"><path d="M0 0h33v33H0z" fill="#2aa8ec"/><path d="m0 24 11-12 22 21H0z" fill="#0f3d78"/><path d="m14 25 11-11 8 8v11H22z" fill="#5b80d8"/><path d="m0 24 11-12 10 10v11H0z" fill="#134a8c"/><circle cx="21" cy="8.500" r="3" fill="#fff"/></svg></div>
  </div>
  <div class="tray">
    <svg width="29" height="34" viewBox="0 0 29 34"><path d="M4 4a5 5 0 0 1 10 0v17a7.500 7.500 0 1 1-10 0z" fill="#8fc9f0" stroke="#6aa5d4"/><path d="M9 8v18" stroke="#e8484f" stroke-width="3.500"/><circle cx="9" cy="26.500" r="5" fill="#e8484f"/><path d="M23.500 4v12" stroke="#2962e8" stroke-width="2.500"/><path d="M19 15.500h9L23.500 22zM19 26.500h9v3h-9z" fill="#2962e8"/></svg>
    <span class="wx">Nea...</span>
    <svg width="20" height="12" viewBox="0 0 20 12"><path d="m1 11 9-9.500 9 9.500" fill="none" stroke="#111" stroke-width="1.500"/></svg>
    <svg width="22" height="24" viewBox="0 0 22 24"><path d="M3 6.500h9.500v11H3zM12.500 10.500l5-3v9l-5-3M3 3q5.500-4.500 11 0M3 21q5.500 4.500 11 0" fill="none" stroke="#222" stroke-width="1.400"/></svg>
    <svg width="26" height="18" viewBox="0 0 26 18"><path d="M5 17a5 5 0 0 1 0-10Q8 1 14 1q6 1 7 7 4 1 4 5t-4 4z" fill="#888" stroke="#222" stroke-width="1.400"/><path d="m3 16 11-7 9 7z" fill="#ddd"/></svg>
    <svg width="16" height="26" viewBox="0 0 16 26"><rect x="3" y="1" width="10" height="17" rx="2"/><path d="M1.500 13v5q0 3 3 3h7q3 0 3-3v-5M8 21v4M3.500 25h9" fill="none" stroke="#000" stroke-width="1.400"/></svg>
    <svg width="26" height="26" viewBox="0 0 26 26"><path d="m1 4 22-3v20L1 23z" fill="none" stroke="#333" stroke-width="1.300"/><path d="M6.500 11q2-4 7-4l3 3M17.500 7v3.500H14M17 13.500q-2 4-7 3.500l-3-2.500M6.500 18v-3.500H10" fill="none" stroke="#111" stroke-width="1.500"/><circle cx="19" cy="20" r="5.700" fill="#2173c8"/></svg>
    <svg width="25" height="18" viewBox="0 0 25 18"><path d="M7 4h15v12.500H5V10M22.500 8H24v5h-1.500" fill="none" stroke="#111" stroke-width="1.400"/><path d="M9 6h5v8.500H7V11z"/><path d="M2.500 0v3M6.500 0v3M1 3.500h7v3q-1 2-3.500 2T1 6.500z" fill="none" stroke="#111" stroke-width="1.400"/></svg>
    <svg width="20" height="20" viewBox="0 0 20 20"><path d="M1 19Q2 3 19 1.500M6 19Q7 7.500 19 6.500M11 19q1-7 8-7.500" fill="none" stroke="#222" stroke-width="1.400"/><circle cx="17" cy="17.500" r="1.700"/></svg>
    <svg width="25" height="23"><use href="#i-spk"/></svg>
    <span class="lang">ENG</span>
    <span class="clock">21:05<br>07-08-2023</span>
    <svg width="36" height="36" viewBox="0 0 36 36"><path d="M0 0h24v18h-9l-5 6v-6H0z"/><path d="M5 5.500h14M5 9.500h14M5 13.500h9" stroke="#d5d6d8" stroke-width="1.500"/><circle cx="23.500" cy="23.500" r="11.500" fill="#d7d7d9" stroke="#666" stroke-width="1.200"/><text x="23.500" y="29.500" class="badge">2</text></svg>
  </div>
</footer>
</body>
</html>
```
FILE: styles.css
```css
* { box-sizing: border-box; }
body { margin: 0; width: 1920px; height: 1080px; overflow: hidden; display: flex; flex-direction: column; background: #fff; font-family: "Open Sans", "Noto Sans", sans-serif; color: #3c4043; }
svg { display: block; flex: none; }
b { font-weight: 400; }
span { white-space: nowrap; }
button { font: inherit; border: 0; padding: 0; }
.defs { width: 0; height: 0; }
.fwd { transform: scaleX(-1); opacity: .4; }
.w { color: #fff; }
.edge-gap { fill: #d5d6d8; }

/* Browser tab strip */
.tabstrip { height: 51px; flex: none; background: #dee1e6; display: flex; padding-left: 12px; }
.tab { display: flex; align-items: center; }
.tab-active { width: 360px; height: 51px; background: #fff; border-radius: 12px 12px 0 0; padding-left: 18px; }
.tab-title { font-size: 17.500px; margin-left: 12px; letter-spacing: -.35px; padding-bottom: 1px; }
.faded { width: 230px; letter-spacing: -.25px; -webkit-mask-image: linear-gradient(90deg, #000 205px, transparent 236px); }
.cast { width: 24px; height: 19px; margin-left: 7px; border: 1.500px solid #1a73e8; background: #1a73e8; box-shadow: inset 0 0 0 1.500px #fff; }
.close { margin-left: 14px; }
.tab-idle { width: 359px; height: 28px; margin-top: 12px; border-right: 1.500px solid #808489; padding-left: 18px; }
.meet { width: 239px; letter-spacing: .08px; }
.close2 { margin-left: 18px; }
.plus { margin: 16px 0 0 24px; }
.wctl { margin: 14px 26px 0 auto; display: flex; gap: 53px; align-items: center; height: 16px; }

/* Toolbar */
.toolbar { height: 54px; flex: none; display: flex; align-items: center; color: #5f6368; }
.navbtns { width: 210px; padding-left: 22px; display: flex; align-items: center; gap: 26px; }
.navbtns svg:nth-child(3) { margin-right: -1px; margin-left: -1px; }
.omni { width: 1452px; height: 42px; border-radius: 21px; background: #f1f3f4; display: flex; align-items: center; padding-left: 20px; }
.url { width: 1333px; padding-left: 17px; font-size: 20.500px; letter-spacing: -.34px; color: #6b6f73; }
.url b { color: #202124; }
.share { margin: 0 23px 0 -1px; }
.tools { display: flex; align-items: center; width: 258px; padding-left: 21px; }
.tools > :nth-child(2) { margin-left: 24px; }
.tools > :nth-child(3) { margin-left: 24px; }
.tools > :nth-child(5) { margin-left: 28px; }
.avatar { width: 33px; height: 33px; border-radius: 50%; background: #512da8; color: #fff; font-size: 17px; line-height: 33px; text-align: center; margin-left: 21px; }

/* Bookmarks */
.bookmarks { height: 50px; flex: none; border-bottom: 2px solid #dadada; padding-left: 21px; display: grid; grid-template-columns: 129px 207px 118px 117px 230px 165px 126px 228px 157px 107px 277px 1fr; align-items: center; font-size: 17.500px; letter-spacing: -.25px; padding-bottom: 7px; }
.bookmarks a { display: flex; align-items: center; gap: 12px; white-space: nowrap; }
.bookmarks svg { width: 24px; height: 24px; }
.more { font-size: 21px; line-height: 20px; }

/* Sharing bar */
.infobar { height: 73px; flex: none; display: flex; align-items: center; border-bottom: 1px solid #cfd3da; }
.shareic { margin-left: 24px; }
.sharing { margin-left: 23px; width: 333px; font-size: 19px; letter-spacing: -.17px; padding-top: 1px; }
.stop { width: 152px; height: 48px; border-radius: 5px; background: #1a73e8; color: #fff; font-weight: 600; font-size: 17.500px; letter-spacing: -.15px; }
.view { width: 272px; height: 48px; margin-left: 12px; border-radius: 5px; border: 1px solid #dadce0; background: #fff; color: #2a66d9; font-size: 17.500px; letter-spacing: -.1px; font-weight: 550; }

/* Player */
.stage { height: 792px; flex: none; background: #323232; position: relative; display: flex; justify-content: center; overflow: hidden; }
.frame { position: absolute; inset: 0; border: 7px solid rgba(26, 93, 175, .72); }
.video { width: 1266px; position: relative; display: flex; flex-direction: column; background: #1c1e20; overflow: hidden; }
.vtop { height: 40px; flex: none; }
.vtabs { height: 32px; flex: none; background: #d5d7e1; display: flex; font-size: 12.500px; color: #555; }
.vtab { width: 226px; margin-left: 7px; height: 32px; padding-left: 12px; display: flex; align-items: center; background: #f7f7fa; border-radius: 7px 7px 0 0; }
.vt1 { margin-left: 8px; width: 172px; font-size: 12.300px; letter-spacing: -.62px; -webkit-mask-image: linear-gradient(90deg, #000 145px, transparent 176px); }
.vtab2 { width: 222px; height: 22px; margin-top: 5px; border-right: 1px solid #999; display: flex; align-items: center; padding-left: 9px; }
.vt2 { margin-left: 7px; width: 163px; margin-right: 9px; font-size: 12.300px; letter-spacing: -.66px; -webkit-mask-image: linear-gradient(90deg, #000 140px, transparent 168px); }
.vplus { margin: 10px 0 0 15px; }
.vctl { display: flex; gap: 33px; margin: 8px 4px 0 auto; }
.vbar { height: 34px; flex: none; background: #fafafc; display: flex; align-items: center; color: #5a5a5a; }
.vnav { width: 102px; padding-left: 13px; display: flex; gap: 16px; align-items: center; }
.vomni { width: 866px; height: 27px; border-radius: 14px; background: #ededf0; display: flex; align-items: center; padding-left: 12px; font-size: 13.500px; }
.vurl { margin-left: 11px; letter-spacing: -.54px; color: #777; }
.vurl b { color: #333; }
.vstar { margin: 0 10px 0 auto; }
.vext { display: flex; align-items: center; gap: 14px; margin-left: 13px; }
.vext svg { width: 16px; height: 16px; }
.vav { width: 21px; height: 21px; border-radius: 50%; background: #5a8f32; color: #fff; font-size: 11px; line-height: 21px; text-align: center; margin: 0 -3px; }
.aws { height: 96px; flex: none; background: #252d40; margin-right: 3px; padding-top: 12px; color: #d6d8dd; border-top: 1px solid #777; box-shadow: 3px 0 0 #f3f3f6; font-weight: 600; }
.awstop { height: 46px; display: flex; justify-content: space-between; align-items: flex-start; padding: 0 37px 0 37px; }
.logo span { display: block; font-size: 29px; line-height: 26px; height: 26px; margin-top: -2px; padding-left: 1px; letter-spacing: -.9px; color: #fff; }
.acct { display: flex; align-items: center; font-size: 12.500px; letter-spacing: -.5px; padding-top: 5px; }
.acct span { margin-right: 14px; }
.acct .dd { margin-right: 17px; }
.dd::after { content: ""; display: inline-block; border: 4px solid transparent; border-top: 5px solid #e8e9ec; border-bottom: 0; margin-left: 3px; vertical-align: 1px; }
.signin { width: 171px; height: 29px; margin-left: 5px; border-radius: 3px; background: linear-gradient(#fd8419, #ee6507); color: #fff; font-weight: 700; font-size: 13.300px; letter-spacing: -.45px; }
.awsnav { display: grid; grid-template-columns: 75px 79px 62px 118px 54px 124px 130px 161px 61px 104px 20px; align-items: center; padding-left: 37px; height: 26px; font-size: 13.500px; letter-spacing: -.3px; }

.page { height: 524px; flex: none; background: #fff; position: relative; padding-top: 26px; }
h1 { margin: 0 0 0 79px; font-size: 26.500px; line-height: 36px; font-weight: 300; letter-spacing: -.52px; color: #33425e; white-space: nowrap; }
.page p { margin: 0 0 0 79px; font-size: 17px; line-height: 26.400px; font-weight: 300; color: #444; white-space: nowrap; }
.page .l1 { margin-top: 15px; height: 99px; letter-spacing: -.33px; }
.page .l2 { margin-top: 13px; font-style: italic; letter-spacing: .04px; }
.diagram text { font-family: "Open Sans", sans-serif; }
.d-bar { font-size: 11.500px; font-weight: 700; fill: #4c4c4c; }
.d-dep { font-size: 10.500px; font-weight: 600; fill: #a0a0a3; }
.d-ver { font-size: 9.500px; font-weight: 600; fill: #888; }
.d-auto { font-size: 10px; font-weight: 700; fill: #9484f5; }
.d-name { font-size: 14.500px; font-weight: 700; fill: #4c4c4c; font-variant: small-caps; }
.d-sub { font-size: 8.800px; font-weight: 600; fill: #666; }
.d-tip { font-size: 13px; fill: #555; }
.site { position: absolute; right: 50px; bottom: 5px; font: 500 21.500px/28px "Roboto Slab", "DejaVu Serif", serif; letter-spacing: -.78px; color: #808080; }

/* Recorded desktop's taskbar, cut off by the video edge */
.vtask { height: 26px; flex: none; background: linear-gradient(#27333f 5px, #2f2f49 6px, #2f2f49 11px, #25323b 12px); display: flex; position: relative; overflow: hidden; }
.vstart { width: 45px; padding: 11px 0 0 14px; }
.vsearch { width: 322px; background: linear-gradient(#f0f0f3 5px, #eee2f3 6px, #eee2f3 11px, #f1f1f2 12px); display: flex; gap: 11px; padding: 10px 0 0 12px; color: #333; font-size: 14px; letter-spacing: -.5px; }
.vsearch span { line-height: 18px; }
.vicons { display: grid; grid-template-columns: repeat(15, 46px); width: 690px; height: 38px; }
.vicons > div { display: flex; align-items: center; justify-content: center; }
.dark .edge-gap { fill: #25323b; }
.c-orange { background: #b8692f; }
.c-grey { background: #4b5160; }
.vtray { display: flex; align-items: flex-start; color: #fff; margin-left: 31px; }
.vtray > svg { margin-top: 13px; }
.vtray > :nth-child(2) { margin-left: 18px; }
.vtray > :nth-child(3) { margin: 12px 0 0 13px; }
.vclock { width: 54px; margin: 2px 0 0 9px; font-size: 11.500px; line-height: 15px; letter-spacing: -.55px; text-align: center; white-space: nowrap; }
.vtray > .vnote { margin: 10px 0 0 12px; }
.mark { position: absolute; right: 9px; top: 2px; font-size: 13px; line-height: 17px; color: rgba(220, 220, 225, .65); }
.vctrl { height: 29px; flex: none; display: flex; align-items: center; padding-left: 25px; fill: #303235; color: #383a3d; font: 500 17px Roboto, sans-serif; }
.rw { margin: 0 13px 0 26px; }
.speed { width: 53px; height: 20px; line-height: 20px; background: #2b2d2f; color: #191b1d; text-align: center; }
.ff { margin-left: 14px; }
.time { margin-left: 18px; }
.vright { display: flex; align-items: center; gap: 19px; margin-left: auto; margin-right: 26px; }
.vtitle { position: absolute; left: 26px; top: 28px; font: 24.500px/36px Roboto, sans-serif; color: rgba(255, 255, 255, .25); letter-spacing: .88px; white-space: nowrap; }
.go { position: absolute; top: 370px; width: 31px; height: 52px; background: #ebebeb; display: flex; align-items: center; justify-content: center; }
.prev { left: 0; }
.next { right: 0; }

/* Taskbar */
.taskbar { height: 60px; flex: none; background: linear-gradient(90deg, #d4d6d9, #d3d3d4 50%, #d9d6d9); display: flex; color: #000; }
.apps { display: grid; grid-template-columns: 72px 71px 77px repeat(11, 72px) repeat(3, 71px); width: 1225px; flex: none; }
.apps > div { display: flex; align-items: center; justify-content: center; position: relative; }
.apps > .on::after { content: ""; position: absolute; bottom: 0; left: 7px; right: 7px; height: 3px; background: #0078d7; }
.apps > .focus { background: #efeff0; margin: 0 1px; }
.apps > .focus::after { left: 0; right: 0; }
.tray { width: 689px; display: grid; grid-template-columns: 45px 90px 36px 33px 40px 33px 35px 41px 32px 40px 47px 130px 40px; align-items: center; padding-left: 32px; border-right: 1px solid #aaa; font-size: 18px; letter-spacing: -.4px; }
.clock { text-align: center; line-height: 27px; margin-right: 22px; }
.badge { font-size: 16px; font-weight: 600; text-anchor: middle; }
```
